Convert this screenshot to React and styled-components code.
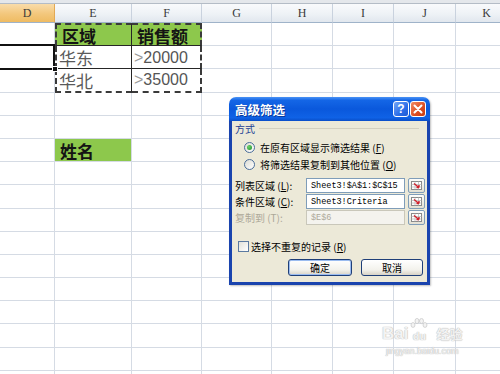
import React from "react";
import styled, { createGlobalStyle } from "styled-components";

const GlobalStyle = createGlobalStyle`
  html, body {
    margin: 0;
    padding: 0;
    background: #fff;
  }
  body {
    font-family: "Liberation Sans", "Noto Sans CJK SC", sans-serif;
  }
`;

const COLS = "55px 77px 70px 70px 61px 61px 62px 62px";
const LETTERS = ["D", "E", "F", "G", "H", "I", "J", "K"];
const ROWS = Array.from({ length: 16 }, (_, i) => i + 1);
const GRID_LINE = "1px solid #d5dbe4";
const ANTS = "2px dashed #3a3a3a";
const INK = "1px solid #262626";

const CELLS = {
  "1-1": { text: "区域", green: true, bold: true },
  "1-2": { text: "销售额", green: true, bold: true },
  "2-1": { text: "华东" },
  "2-2": { num: "20000" },
  "3-1": { text: "华北" },
  "3-2": { num: "35000" },
  "6-1": { text: "姓名", green: true, bold: true },
};

// the criteria table E1:F3 has black lines and a copy marquee round it
const tableBorders = (r, c) => {
  if (r > 3 || c < 1 || c > 2) return {};
  return {
    $top: r === 1 ? ANTS : undefined,
    $left: c === 1 ? ANTS : undefined,
    $right: c === 2 ? ANTS : INK,
    $bottom: r === 3 ? ANTS : INK,
  };
};

const App = () => {
  return (
    <>
      <GlobalStyle />
      <StPage>
        <StTopStrip />
        <StHeaderRow>
          {LETTERS.map((l) => (
            <StHeadCell key={l} $active={l === "D"}>{l}</StHeadCell>
          ))}
        </StHeaderRow>
        <StSheet>
          {ROWS.map((r) =>
            LETTERS.map((_, c) => {
              const d = CELLS[`${r}-${c}`] || {};
              return (
                <StCell
                  key={`${r}-${c}`}
                  $green={d.green}
                  $bold={d.bold}
                  $selected={r === 2 && c === 0}
                  {...tableBorders(r, c)}
                >
                  {d.text}
                  {d.num && (
                    <StNum>
                      <StGt>&gt;</StGt>
                      {d.num}
                    </StNum>
                  )}
                </StCell>
              );
            })
          )}
        </StSheet>

        <StDialog>
          <StTitleBar>
            <StTitle>高级筛选</StTitle>
            <StCaptionBtn $kind="help">?</StCaptionBtn>
            <StCaptionBtn $kind="close">
              <svg width="10" height="10" viewBox="0 0 10 10">
                <path d="M1.5 1.5 L8.5 8.5 M8.5 1.5 L1.5 8.5" stroke="#fff" strokeWidth="2" strokeLinecap="round" />
              </svg>
            </StCaptionBtn>
          </StTitleBar>
          <StBody>
            <StLegend>方式</StLegend>
            <StRadioGroup>
              <StRadioRow>
                <StRadio $checked />
                <span>在原有区域显示筛选结果 (<u>F</u>)</span>
              </StRadioRow>
              <StRadioRow>
                <StRadio />
                <span>将筛选结果复制到其他位置 (<u>O</u>)</span>
              </StRadioRow>
            </StRadioGroup>
            <StFields>
              <StFieldRow>
                <StLabel>列表区域 (<u>L</u>):</StLabel>
                <StInput>Sheet3!$A$1:$C$15</StInput>
                <RefButton />
              </StFieldRow>
              <StFieldRow>
                <StLabel>条件区域 (<u>C</u>):</StLabel>
                <StInput>Sheet3!Criteria</StInput>
                <RefButton />
              </StFieldRow>
              <StFieldRow>
                <StLabel $disabled>复制到 (T):</StLabel>
                <StInput $disabled>$E$6</StInput>
                <RefButton />
              </StFieldRow>
            </StFields>
            <StCheckRow>
              <StCheckbox />
              <span>选择不重复的记录 (<u>R</u>)</span>
            </StCheckRow>
            <StButtons>
              <StButton $w={64} $default>确定</StButton>
              <StButton $w={62}>取消</StButton>
            </StButtons>
          </StBody>
        </StDialog>

        <StWatermark>
          <StWmLogo>
            <span>Bai</span>
            <StWmPaw>
              <svg width="18" height="12" viewBox="0 0 18 12">
                <g fill="#f3f3f3" stroke="#c4c4c4" strokeWidth="0.7">
                  <ellipse cx="3" cy="7" rx="2" ry="2.4" />
                  <ellipse cx="7" cy="3" rx="2" ry="2.6" />
                  <ellipse cx="11.5" cy="3" rx="2" ry="2.6" />
                  <ellipse cx="15" cy="7" rx="2" ry="2.4" />
                </g>
              </svg>
              <StWmDu>du</StWmDu>
            </StWmPaw>
            <StWmCn>经验</StWmCn>
          </StWmLogo>
          <StWmUrl>jingyan.baidu.com</StWmUrl>
        </StWatermark>
      </StPage>
    </>
  );
};

const RefButton = () => (
  <StRefBtn>
    <svg width="11" height="9" viewBox="0 0 11 9">
      <rect x="0.5" y="0.5" width="10" height="8" fill="#fff" stroke="#8a8a8a" />
      <path d="M0.5 3.5 H10.5 M0.5 6 H10.5 M4 0.5 V8.5 M7.5 0.5 V8.5" stroke="#b5b5b5" strokeWidth="0.7" />
      <path d="M3 2.5 L8 6.5 M8 6.5 L8 4 M8 6.5 L5.5 6.5" stroke="#d0202a" strokeWidth="1.4" />
    </svg>
  </StRefBtn>
);

export default App;


const StPage = styled.div`
  position: relative;
  width: 500px;
  height: 374px;
  overflow: hidden;
  background: #fff;
`;
const StTopStrip = styled.div`
  height: 4px;
  box-sizing: border-box;
  background: #e4e7eb;
  border-bottom: 1px solid #b4bcc6;
`;
const StHeaderRow = styled.div`
  display: grid;
  grid-template-columns: ${COLS};
  height: 19px;
`;
const StHeadCell = styled.div`
  box-sizing: border-box;
  display: flex;
  align-items: center;
  justify-content: center;
  border-right: 1px solid ${(p) => (p.$active ? "#e2a955" : "#c9d2de")};
  border-bottom: 1px solid #9fb3c9;
  background: ${(p) =>
    p.$active
      ? "linear-gradient(#f9dcaa, #f3c77c 55%, #efbb62)"
      : "linear-gradient(#f9fafc, #eef2f6 55%, #e1e7ee)"};
  font: 12px "Liberation Serif", serif;
  color: #3a3a3a;
`;
const StSheet = styled.div`
  display: grid;
  grid-template-columns: ${COLS};
  grid-auto-rows: 23.2px;
`;
const StCell = styled.div`
  position: relative;
  box-sizing: border-box;
  display: flex;
  align-items: center;
  padding: 1px 3px 0 ${(p) => (p.$bold ? 5 : 2)}px;
  white-space: nowrap;
  line-height: 1;
  border-top: ${(p) => p.$top || "none"};
  border-left: ${(p) => p.$left || "none"};
  border-right: ${(p) => p.$right || GRID_LINE};
  border-bottom: ${(p) => p.$bottom || GRID_LINE};
  background: ${(p) => (p.$green ? "#8dc84c" : "#fff")};
  font: ${(p) => (p.$bold ? 700 : 400)} 17px/1 "Noto Sans CJK SC", sans-serif;
  color: ${(p) => (p.$bold ? "#141414" : "#5a5a5a")};
  ${(p) =>
    p.$selected &&
    `
    &::after {
      content: "";
      position: absolute;
      left: -3px;
      right: -1px;
      top: -2px;
      bottom: -2px;
      border: 2px solid #111;
      z-index: 2;
    }
    &::before {
      content: "";
      position: absolute;
      right: -4px;
      bottom: -4px;
      width: 4px;
      height: 4px;
      background: #111;
      border: 1px solid #fff;
      z-index: 3;
    }
  `}
`;
const StNum = styled.span`
  font: 16px/1 "Liberation Sans", sans-serif;
  color: #555;
`;
const StGt = styled.span`
  color: #9a9a9a;
`;

const StDialog = styled.div`
  position: absolute;
  left: 229px;
  top: 97px;
  width: 201px;
  display: flex;
  flex-direction: column;
  border-radius: 7px 7px 0 0;
  box-shadow: 1px 1px 2px rgba(0, 0, 0, 0.25);
  font: 10px "Noto Sans CJK SC", sans-serif;
  color: #000;
  z-index: 5;
`;
const StTitleBar = styled.div`
  display: flex;
  align-items: center;
  gap: 1px;
  height: 24px;
  box-sizing: border-box;
  padding: 0 4px 0 6px;
  border-radius: 7px 7px 0 0;
  background: linear-gradient(#4a93f5, #1466e6 14%, #0a58dc 50%, #0f62e6 86%, #0a4ec8);
`;
const StTitle = styled.div`
  flex: 1;
  color: #fff;
  font: 700 12.5px "Noto Sans CJK SC", sans-serif;
  text-shadow: 1px 1px 0 #0a3a9a;
`;
const StCaptionBtn = styled.div`
  width: 16px;
  height: 16px;
  box-sizing: border-box;
  display: flex;
  align-items: center;
  justify-content: center;
  border: 1px solid #fff;
  border-radius: 3px;
  background: ${(p) =>
    p.$kind === "close"
      ? "linear-gradient(135deg, #f08a63, #dd4d22 60%, #c53c14)"
      : "linear-gradient(135deg, #74a6f7, #2c6ee8 60%, #1f5ad4)"};
  color: #fff;
  font: 700 12px "Liberation Sans", sans-serif;
`;
const StBody = styled.div`
  display: flex;
  flex-direction: column;
  padding: 1px 2px 6px 3px;
  background: #ece9d8;
  border: 3px solid #1a44ae;
  border-top: none;
`;
const StLegend = styled.div`
  display: flex;
  align-items: center;
  gap: 4px;
  height: 13px;
  color: #1c3f94;
  &::after {
    content: "";
    flex: 1;
    height: 1px;
    margin-right: 6px;
    background: #d3d0c0;
  }
`;
const StRadioGroup = styled.div`
  display: flex;
  flex-direction: column;
  margin-top: 4px;
`;
const StRadioRow = styled.div`
  display: flex;
  align-items: center;
  gap: 5px;
  height: 17px;
  padding-left: 9px;
`;
const StRadio = styled.span`
  width: 11px;
  height: 11px;
  box-sizing: border-box;
  display: flex;
  align-items: center;
  justify-content: center;
  border: 1px solid #4a6d9a;
  border-radius: 50%;
  background: linear-gradient(135deg, #dcdcd4, #fff);
  &::after {
    content: "";
    width: 5px;
    height: 5px;
    border-radius: 50%;
    background: ${(p) => (p.$checked ? "radial-gradient(circle at 35% 35%, #6ad06a, #1f8f2a)" : "transparent")};
  }
`;
const StFields = styled.div`
  display: flex;
  flex-direction: column;
  gap: 1px;
  margin-top: 5px;
`;
const StFieldRow = styled.div`
  display: flex;
  align-items: center;
  height: 15px;
`;
const StLabel = styled.div`
  flex: 0 0 71px;
  color: ${(p) => (p.$disabled ? "#aca899" : "#000")};
`;
const StInput = styled.div`
  width: 99px;
  height: 15px;
  box-sizing: border-box;
  display: flex;
  align-items: center;
  padding: 0 4px;
  border: 1px solid ${(p) => (p.$disabled ? "#c9c7ba" : "#7f9db9")};
  background: ${(p) => (p.$disabled ? "#f4f3ee" : "#fff")};
  font: 8.5px "Liberation Mono", monospace;
  color: ${(p) => (p.$disabled ? "#aca899" : "#000")};
`;
const StRefBtn = styled.div`
  width: 17px;
  height: 15px;
  box-sizing: border-box;
  margin-left: 3px;
  display: flex;
  align-items: center;
  justify-content: center;
  border: 1px solid #7f9db9;
  border-radius: 2px;
  background: linear-gradient(#fdfdfb, #e3e0d3);
`;
const StCheckRow = styled.div`
  display: flex;
  align-items: center;
  gap: 2px;
  height: 14px;
  margin-top: 14px;
  padding-left: 3px;
`;
const StCheckbox = styled.span`
  width: 11px;
  height: 11px;
  box-sizing: border-box;
  border: 1px solid #5b7aa1;
  background: linear-gradient(135deg, #e1e1da, #fff);
`;
const StButtons = styled.div`
  display: flex;
  justify-content: flex-end;
  gap: 9px;
  margin-top: 6px;
  padding-right: 2px;
`;
const StButton = styled.button`
  width: ${(p) => p.$w}px;
  height: 17px;
  box-sizing: border-box;
  padding: 0;
  border: 1px solid #1f3f78;
  border-radius: 3px;
  background: linear-gradient(#fff, #f3f2ec 65%, #d8d3c6);
  box-shadow: ${(p) => (p.$default ? "inset 0 0 0 1px #9bbcf0" : "none")};
  font: 10px "Noto Sans CJK SC", sans-serif;
  color: #000;
`;

const StWatermark = styled.div`
  position: absolute;
  left: 382px;
  top: 318px;
  display: flex;
  flex-direction: column;
  align-items: center;
  color: #f3f3f3;
  text-shadow: 0 0 1px #b9b9b9, 0 0 1px #b9b9b9;
  pointer-events: none;
`;
const StWmLogo = styled.div`
  display: flex;
  align-items: flex-end;
  gap: 2px;
  font: 700 17px "Liberation Sans", sans-serif;
  line-height: 17px;
`;
const StWmPaw = styled.div`
  display: flex;
  flex-direction: column;
  align-items: center;
`;
const StWmDu = styled.span`
  font: 700 11px "Liberation Sans", sans-serif;
  line-height: 12px;
`;
const StWmCn = styled.span`
  margin-left: 6px;
  font: 700 13px "Noto Sans CJK SC", sans-serif;
  line-height: 16px;
`;
const StWmUrl = styled.div`
  margin-top: 4px;
  font: 9px "Liberation Sans", sans-serif;
`;
